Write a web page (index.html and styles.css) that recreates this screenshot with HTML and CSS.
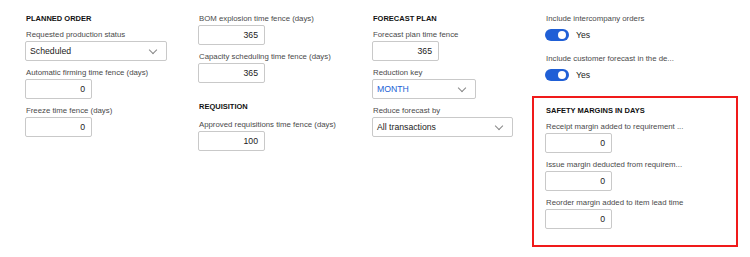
FILE: index.html
```html
<!DOCTYPE html>
<html lang="en">
<head>
  <meta charset="UTF-8">
  <title>Master planning parameters</title>
  <link rel="stylesheet" href="styles.css">
</head>
<body>
  <div class="params">
    <div class="col">
      <h4>PLANNED ORDER</h4>
      <div class="field">
        <label>Requested production status</label>
        <div class="box select wide">Scheduled<span class="chev"></span></div>
      </div>
      <div class="field">
        <label>Automatic firming time fence (days)</label>
        <div class="box num">0</div>
      </div>
      <div class="field">
        <label>Freeze time fence (days)</label>
        <div class="box num">0</div>
      </div>
    </div>

    <div class="col">
      <div class="field">
        <label>BOM explosion time fence (days)</label>
        <div class="box num">365</div>
      </div>
      <div class="field">
        <label>Capacity scheduling time fence (days)</label>
        <div class="box num">365</div>
      </div>
      <h4 class="later">REQUISITION</h4>
      <div class="field">
        <label>Approved requisitions time fence (days)</label>
        <div class="box num">100</div>
      </div>
    </div>

    <div class="col">
      <h4>FORECAST PLAN</h4>
      <div class="field">
        <label>Forecast plan time fence</label>
        <div class="box num">365</div>
      </div>
      <div class="field">
        <label>Reduction key</label>
        <div class="box select mid link">MONTH<span class="chev"></span></div>
      </div>
      <div class="field">
        <label>Reduce forecast by</label>
        <div class="box select wider">All transactions<span class="chev"></span></div>
      </div>
    </div>

    <div class="col">
      <div class="toggle-field">
        <label>Include intercompany orders</label>
        <div class="toggle"><span class="switch"></span>Yes</div>
      </div>
      <div class="toggle-field">
        <label>Include customer forecast in the de...</label>
        <div class="toggle"><span class="switch"></span>Yes</div>
      </div>

      <div class="highlight">
        <h4>SAFETY MARGINS IN DAYS</h4>
        <div class="field">
          <label>Receipt margin added to requirement ...</label>
          <div class="box num">0</div>
        </div>
        <div class="field">
          <label>Issue margin deducted from requirem...</label>
          <div class="box num">0</div>
        </div>
        <div class="field">
          <label>Reorder margin added to item lead time</label>
          <div class="box num">0</div>
        </div>
      </div>
    </div>
  </div>
</body>
</html>
```

FILE: styles.css
```css
html, body {
  margin: 0;
  padding: 0;
  background-color: white;
  color: #222;
  font-family: "Liberation Sans", Arial, sans-serif;
  font-size: 7.8px;
}
.params {
  display: grid;
  grid-template-columns: 173px 174px 173px 1fr;
  padding: 12px 0 0 25px;
}
h4 {
  margin: 0 0 2px 1px;
  font-size: 7.5px;
  line-height: 14px;
  font-weight: bold;
  color: #111;
}
h4.later {
  margin-top: 17px;
  margin-bottom: 4px;
}
.field {
  margin-bottom: 5px;
}
.field label, .toggle-field label {
  display: block;
  color: #4a4a4a;
  line-height: 13px;
  margin-left: 1px;
}
.box {
  box-sizing: border-box;
  height: 20px;
  border: 1px solid #c9c9c9;
  border-radius: 2px;
  font-size: 8.7px;
  line-height: 18px;
  padding: 0 6px;
  color: #222;
  position: relative;
}
.num {
  width: 67px;
  text-align: right;
}
.select {
  padding-left: 4px;
}
.wide { width: 142px; }
.mid { width: 104px; }
.wider { width: 141px; }
.link { color: #1a5fd6; }
.chev {
  position: absolute;
  right: 10px;
  top: 5px;
  width: 5px;
  height: 5px;
  border-right: 1px solid #888;
  border-bottom: 1px solid #888;
  transform: rotate(45deg);
}
.toggle-field {
  margin-bottom: 7px;
}
.toggle {
  display: flex;
  align-items: center;
  gap: 7px;
  height: 20px;
  font-size: 8.7px;
  color: #222;
}
.switch {
  width: 24px;
  height: 12px;
  border-radius: 6px;
  background-color: #1f5fd6;
  position: relative;
}
.switch::after {
  content: "";
  position: absolute;
  right: 3px;
  top: 2px;
  width: 8px;
  height: 8px;
  border-radius: 50%;
  background-color: white;
}
.highlight {
  margin: 11px 12px 0 -13px;
  border: 2px solid #f01a1a;
  padding: 6px 11px 11px 11px;
}
```
